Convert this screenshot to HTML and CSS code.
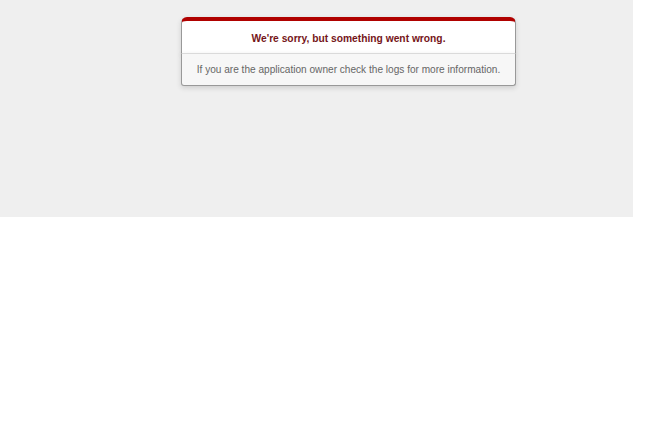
FILE: index.html
```html
<!DOCTYPE html>
<html lang="en">
<head>
	<meta charset="UTF-8">
	<title>We're sorry, but something went wrong (500)</title>
	<link rel="stylesheet" href="styles.css">
</head>
<body>
	<div class="page">
		<div class="dialog">
			<div class="head">
				<h1>We're sorry, but something went wrong.</h1>
			</div>
			<p>If you are the application owner check the logs for more information.</p>
		</div>
	</div>
</body>
</html>
```

FILE: styles.css
```css
*{margin:0;padding:0;box-sizing:border-box;}
body{
	background:#fff;
	font-family:"Liberation Sans",Arial,sans-serif;
	color:#2E2F30;
}
.page{
	width:633px;
	height:217px;
	background:#EFEFEF;
	padding-top:17px;
	padding-left:181px;
}
.dialog{
	width:335px;
	text-align:center;
}
.head{
	height:36px;
	padding-top:4px;
	background:#fff;
	border:1px solid #CCC;
	border-right-color:#999;
	border-left-color:#999;
	border-bottom:none;
	border-top:4px solid #B00100;
	border-top-left-radius:6px;
	border-top-right-radius:6px;
	box-shadow:0 2px 5px rgba(50,50,50,0.17);
	display:flex;
	align-items:center;
	justify-content:center;
}
.head h1{
	font-size:10.25px;
	font-weight:bold;
	color:#751519;
	line-height:16px;
}
.dialog p{
	height:33px;
	background:#F7F7F7;
	border:1px solid #999;
	border-top-color:#DADADA;
	border-bottom-color:#999;
	border-bottom-left-radius:3px;
	border-bottom-right-radius:3px;
	box-shadow:0 2px 5px rgba(50,50,50,0.17);
	font-size:10.1px;
	line-height:32px;
	color:#666;
}
```
